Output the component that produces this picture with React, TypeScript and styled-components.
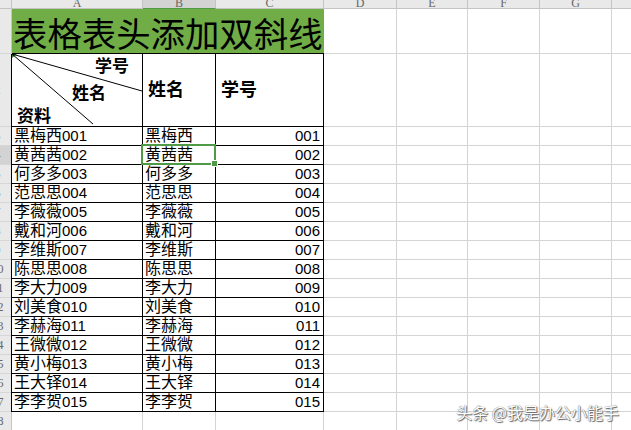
import React from "react";
import styled, { createGlobalStyle, css } from "styled-components";

const GRID = "#d4d4d4";
const LINE = "#000";
const GREEN = "#70ad47";
const SEL = "#4f9a47";
const HEAD_BG = "#e9e9e9";
const HEAD_ACTIVE = "#d3d3d3";
const HEAD_LINE = "#c4c4c4";

const GlobalStyle = createGlobalStyle`
  html, body { margin: 0; padding: 0; background: #fff; overflow: hidden; }
  body { font-family: "Liberation Sans", "Noto Sans CJK SC", sans-serif; }
`;

const Sheet = styled.div`
  position: relative;
  display: grid;
  grid-template-columns: 12px 131px 73px 108px 73px 71px 72px 72px 72px;
  grid-template-rows: 9px 45px 73px repeat(16, 19px);
  width: 631px;
  height: 430px;
  overflow: hidden;
  background: #fff;
`;

const Corner = styled.div`
  box-sizing: border-box;
  background: ${HEAD_BG};
  border-right: 1px solid ${HEAD_LINE};
  border-bottom: 1px solid ${HEAD_LINE};
`;

const ColHeader = styled.div<{ $active?: boolean }>`
  box-sizing: border-box;
  display: flex;
  justify-content: center;
  align-items: flex-start;
  overflow: hidden;
  background: ${(p) => (p.$active ? HEAD_ACTIVE : HEAD_BG)};
  border-right: 1px solid ${HEAD_LINE};
  border-bottom: 1px solid ${(p) => (p.$active ? SEL : HEAD_LINE)};
`;

const ColLabel = styled.span`
  margin-top: -3px;
  font: 12px/12px "Liberation Serif", serif;
  color: #666;
`;

const RowHeader = styled.div<{ $active?: boolean }>`
  box-sizing: border-box;
  display: flex;
  justify-content: flex-end;
  align-items: center;
  overflow: hidden;
  background: ${(p) => (p.$active ? HEAD_ACTIVE : HEAD_BG)};
  border-right: 1px solid ${(p) => (p.$active ? SEL : HEAD_LINE)};
  border-bottom: 1px solid #d6d6d6;
`;

const RowNum = styled.span`
  flex: 0 0 27px;
  text-align: center;
  font: 12px/12px "Liberation Serif", serif;
  color: #666;
`;

const Cell = styled.div<{ $boxed?: boolean; $first?: boolean; $align?: "left" | "right" | "center" }>`
  box-sizing: border-box;
  position: relative;
  display: flex;
  align-items: flex-end;
  justify-content: ${(p) => (p.$align === "right" ? "flex-end" : "flex-start")};
  padding: 0 3px 0 2px;
  border-right: 1px solid ${(p) => (p.$boxed ? LINE : GRID)};
  border-bottom: 1px solid ${(p) => (p.$boxed ? LINE : GRID)};
  ${(p) =>
    p.$first &&
    css`
      box-shadow: -1px 0 0 ${LINE};
    `}
  font-size: 16px;
  line-height: 18px;
  color: #000;
  white-space: nowrap;
`;

const Num = styled.span`
  font: 15px/18px "Liberation Sans", sans-serif;
`;

const TitleCell = styled.div`
  grid-column: span 3;
  box-sizing: border-box;
  display: flex;
  align-items: flex-end;
  padding: 0 0 1px 1px;
  background: ${GREEN};
  border-bottom: 1px solid ${LINE};
  overflow: hidden;
  white-space: nowrap;
  font: 34.4px/40px "Noto Sans CJK SC", sans-serif;
  color: #000;
`;

const HeadCell = styled(Cell)`
  align-items: center;
  padding-left: 5px;
  font-weight: 700;
  font-size: 18px;
  line-height: 20px;
`;

const DiagCell = styled.div`
  box-sizing: border-box;
  position: relative;
  display: flex;
  flex-direction: column;
  border-right: 1px solid ${LINE};
  border-bottom: 1px solid ${LINE};
  box-shadow: -1px 0 0 ${LINE};
  &::before {
    content: "";
    position: absolute;
    top: 0;
    left: 0;
    border-top: 4px solid #2f7d32;
    border-right: 5px solid transparent;
  }
`;

const DiagLines = styled.svg`
  position: absolute;
  left: 0;
  top: 0;
  width: 130px;
  height: 72px;
  pointer-events: none;
`;

const DiagLabel = styled.div<{ $top: number; $left?: number; $right?: boolean }>`
  margin-top: ${(p) => p.$top}px;
  ${(p) =>
    p.$right
      ? css`
          align-self: flex-end;
          margin-right: 13px;
        `
      : css`
          margin-left: ${p.$left ?? 0}px;
        `}
  font: 700 17px/18px "Noto Sans CJK SC", sans-serif;
  color: #000;
  white-space: nowrap;
`;

const Selection = styled.div`
  position: absolute;
  left: -2px;
  top: -2px;
  right: -1px;
  bottom: -1px;
  border: 2px solid ${SEL};
  z-index: 2;
  pointer-events: none;
  &::after {
    content: "";
    position: absolute;
    right: -4px;
    bottom: -4px;
    width: 5px;
    height: 5px;
    background: ${SEL};
    border: 1px solid #fff;
  }
`;

const Watermark = styled.div`
  position: absolute;
  right: 12px;
  bottom: 8px;
  z-index: 3;
  font: 16px/20px "Noto Sans CJK SC", sans-serif;
  color: #fff;
  white-space: nowrap;
  text-shadow: 0 0 1px #444, 1px 1px 1px #666;
`;

const COLS = ["A", "B", "C", "D", "E", "F", "G", "H"];
const NAMES = [
  "黑梅西",
  "黄茜茜",
  "何多多",
  "范思思",
  "李薇薇",
  "戴和河",
  "李维斯",
  "陈思思",
  "李大力",
  "刘美食",
  "李赫海",
  "王微微",
  "黄小梅",
  "王大铎",
  "李李贺",
];

const Blanks = ({ row, count }: { row: number; count: number }) => (
  <>
    {Array.from({ length: count }, (_, i) => (
      <Cell key={`b-${row}-${i}`} />
    ))}
  </>
);

export default function App() {
  return (
    <>
      <GlobalStyle />
      <Sheet>
        <Corner />
        {COLS.map((c) => (
          <ColHeader key={c} $active={c === "B"}>
            <ColLabel>{c}</ColLabel>
          </ColHeader>
        ))}

        <RowHeader>
          <RowNum>1</RowNum>
        </RowHeader>
        <TitleCell>表格表头添加双斜线</TitleCell>
        <Blanks row={1} count={5} />

        <RowHeader>
          <RowNum>2</RowNum>
        </RowHeader>
        <DiagCell>
          <DiagLines viewBox="0 0 130 72">
            <line x1="0" y1="0" x2="130" y2="37" stroke="#000" strokeWidth="1" />
            <line x1="0" y1="0" x2="81" y2="70" stroke="#000" strokeWidth="1" />
          </DiagLines>
          <DiagLabel $top={2} $right>
            学号
          </DiagLabel>
          <DiagLabel $top={9} $left={60}>
            姓名
          </DiagLabel>
          <DiagLabel $top={5} $left={5}>
            资料
          </DiagLabel>
        </DiagCell>
        <HeadCell $boxed>姓名</HeadCell>
        <HeadCell $boxed>学号</HeadCell>
        <Blanks row={2} count={5} />

        {NAMES.map((name, i) => {
          const row = i + 3;
          const num = String(i + 1).padStart(3, "0");
          return (
            <React.Fragment key={name}>
              <RowHeader $active={row === 4}>
                <RowNum>{row}</RowNum>
              </RowHeader>
              <Cell $boxed $first>
                {name}
                <Num>{num}</Num>
              </Cell>
              <Cell $boxed>
                {name}
                {row === 4 && <Selection />}
              </Cell>
              <Cell $boxed $align="right">
                <Num>{num}</Num>
              </Cell>
              <Blanks row={row} count={5} />
            </React.Fragment>
          );
        })}

        <RowHeader>
          <RowNum>18</RowNum>
        </RowHeader>
        <Blanks row={18} count={8} />

        <Watermark>头条 @我是办公小能手</Watermark>
      </Sheet>
    </>
  );
}
